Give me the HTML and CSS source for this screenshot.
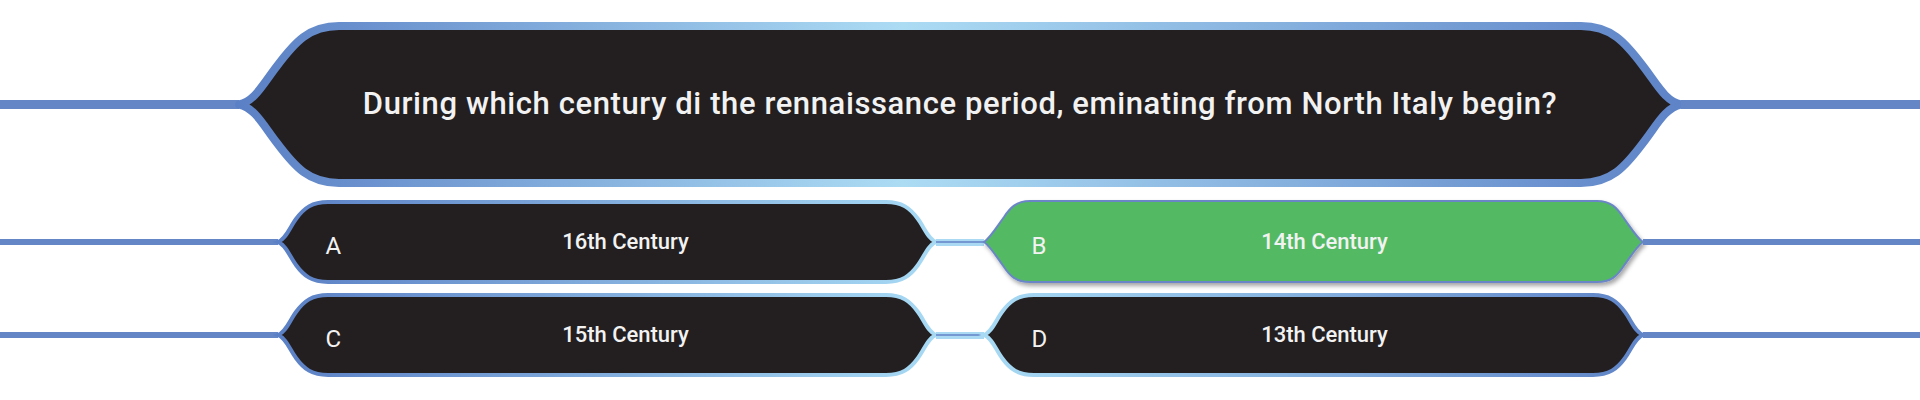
FILE: index.html
```html
<!DOCTYPE html>
<html lang="en">
<head>
<meta charset="utf-8">
<title>Quiz</title>
<link rel="stylesheet" href="styles.css">
</head>
<body>
<main class="quiz">
  <section class="q-row">
    <div class="rail rail-q"></div>
    <div class="q-box">
      <svg class="shape" width="1442" height="165" viewBox="0 0 1442 165">
        <defs>
          <linearGradient id="g-q" x1="0" y1="0" x2="1" y2="0">
            <stop offset="0" stop-color="#5b80c5"/>
            <stop offset="0.46" stop-color="#acdcf4"/>
            <stop offset="1" stop-color="#5e83c7"/>
          </linearGradient>
        </defs>
        <path d="M 0,82.5 C 16,79 24,62 38,44 C 56,20 70,4 100,4 L 1342,4 C 1372,4 1386,20 1404,44 C 1418,62 1426,79 1442,82.5 C 1426,86 1418,103 1404,121 C 1386,145 1372,161 1342,161 L 100,161 C 70,161 56,145 38,121 C 24,103 16,86 0,82.5 Z" fill="#231f20" stroke="url(#g-q)" stroke-width="8" stroke-linejoin="round"/>
      </svg>
      <p class="q-text">During which century di the rennaissance period, eminating from North Italy begin?</p>
    </div>
    <div class="rail rail-q"></div>
  </section>

  <section class="answers">
    <div class="a-row">
      <div class="rail rail-a"></div>
      <div class="a-box col-left">
        <svg class="shape" width="658" height="84" viewBox="0 0 658 84">
          <defs>
            <linearGradient id="g-a" x1="0" y1="0" x2="1" y2="0">
              <stop offset="0" stop-color="#5b80c5"/>
              <stop offset="1" stop-color="#a8daf4"/>
            </linearGradient>
          </defs>
          <path d="M 0,42 C 8,39 12,27 18,19 C 26,8 34,2 50,2 L 608,2 C 624,2 632,8 640,19 C 646,27 650,39 658,42 C 650,45 646,57 640,65 C 632,76 624,82 608,82 L 50,82 C 34,82 26,76 18,65 C 12,57 8,45 0,42 Z" fill="#231f20" stroke="url(#g-a)" stroke-width="4"/>
        </svg>
        <div class="a-content">
          <span class="letter">A</span>
          <span class="a-text">16th Century</span>
        </div>
      </div>
      <div class="link"></div>
      <div class="a-box col-right correct">
        <svg class="shape" width="659" height="84" viewBox="0 0 659 84">
          <defs>
            <filter id="f-b" x="-5%" y="-20%" width="110%" height="150%">
              <feDropShadow dx="2" dy="3" stdDeviation="2" flood-color="#000" flood-opacity="0.35"/>
            </filter>
          </defs>
          <path d="M 0,42 C 6,38 12,28 20,17 C 26,8 32,1 46,1 L 613,1 C 627,1 633,8 639,17 C 647,28 653,38 659,42 C 653,46 647,56 639,67 C 633,76 627,82 613,82 L 46,82 C 32,82 26,76 20,67 C 12,56 6,46 0,42 Z" fill="#53ba63" stroke="#6a86c6" stroke-width="2" filter="url(#f-b)"/>
        </svg>
        <div class="a-content">
          <span class="letter">B</span>
          <span class="a-text">14th Century</span>
        </div>
      </div>
      <div class="rail rail-a"></div>
    </div>

    <div class="a-row">
      <div class="rail rail-a"></div>
      <div class="a-box col-left">
        <svg class="shape" width="658" height="84" viewBox="0 0 658 84">
          <defs>
            <linearGradient id="g-c" x1="0" y1="0" x2="1" y2="0">
              <stop offset="0" stop-color="#5b80c5"/>
              <stop offset="1" stop-color="#a8daf4"/>
            </linearGradient>
          </defs>
          <path d="M 0,42 C 8,39 12,27 18,19 C 26,8 34,2 50,2 L 608,2 C 624,2 632,8 640,19 C 646,27 650,39 658,42 C 650,45 646,57 640,65 C 632,76 624,82 608,82 L 50,82 C 34,82 26,76 18,65 C 12,57 8,45 0,42 Z" fill="#231f20" stroke="url(#g-c)" stroke-width="4"/>
        </svg>
        <div class="a-content">
          <span class="letter">C</span>
          <span class="a-text">15th Century</span>
        </div>
      </div>
      <div class="link"></div>
      <div class="a-box col-right">
        <svg class="shape" width="659" height="84" viewBox="0 0 659 84">
          <defs>
            <linearGradient id="g-d" x1="0" y1="0" x2="1" y2="0">
              <stop offset="0" stop-color="#a8daf4"/>
              <stop offset="1" stop-color="#5f84c7"/>
            </linearGradient>
          </defs>
          <path d="M 0,42 C 8,39 12,27 18,19 C 26,8 34,2 50,2 L 609,2 C 625,2 633,8 641,19 C 647,27 651,39 659,42 C 651,45 647,57 641,65 C 633,76 625,82 609,82 L 50,82 C 34,82 26,76 18,65 C 12,57 8,45 0,42 Z" fill="#231f20" stroke="url(#g-d)" stroke-width="4"/>
        </svg>
        <div class="a-content">
          <span class="letter">D</span>
          <span class="a-text">13th Century</span>
        </div>
      </div>
      <div class="rail rail-a"></div>
    </div>
  </section>
</main>
</body>
</html>
```

FILE: styles.css
```css
* {
  box-sizing: border-box;
}

html,
body {
  margin: 0;
  padding: 0;
  background: #ffffff;
}

body {
  font-family: Roboto, "Liberation Sans", sans-serif;
  color: #f2f2f2;
}

.quiz {
  width: 1920px;
  height: 400px;
  padding-top: 22px;
}

.q-row {
  display: flex;
  align-items: center;
  height: 165px;
}

.rail {
  flex: 1;
  background: #6586c6;
}

.rail-q {
  height: 9px;
}

.rail-a {
  height: 6px;
}

.q-box {
  flex: none;
  width: 1442px;
  height: 165px;
  display: grid;
}

.q-box > *,
.a-box > * {
  grid-area: 1 / 1;
}

.shape {
  display: block;
  overflow: visible;
}

.q-text {
  margin: 0;
  align-self: center;
  justify-self: center;
  font-size: 31px;
  font-weight: 500;
  letter-spacing: 0.6px;
  line-height: 1;
  padding-bottom: 2px;
  white-space: nowrap;
}

.answers {
  margin-top: 13px;
  display: flex;
  flex-direction: column;
  gap: 9px;
}

.a-row {
  display: flex;
  align-items: center;
  height: 84px;
}

.a-box {
  flex: none;
  height: 84px;
  display: grid;
}

.col-left {
  width: 658px;
}

.col-right {
  width: 659px;
}

.a-content {
  display: flex;
  align-items: center;
  padding-left: 48px;
}

.col-left .a-content {
  padding-right: 34px;
}

.col-right .a-content {
  padding-right: 49px;
}

.letter {
  width: 24px;
  font-size: 24px;
  line-height: 1;
  margin-top: 7px;
}

.a-text {
  flex: 1;
  text-align: center;
  font-size: 22px;
  font-weight: 500;
  line-height: 1;
}

.link {
  flex: none;
  width: 48px;
  height: 7px;
  background: linear-gradient(#a9d9f3 0 2px, #7598d2 2px 4px, #a9d9f3 4px);
}
```
